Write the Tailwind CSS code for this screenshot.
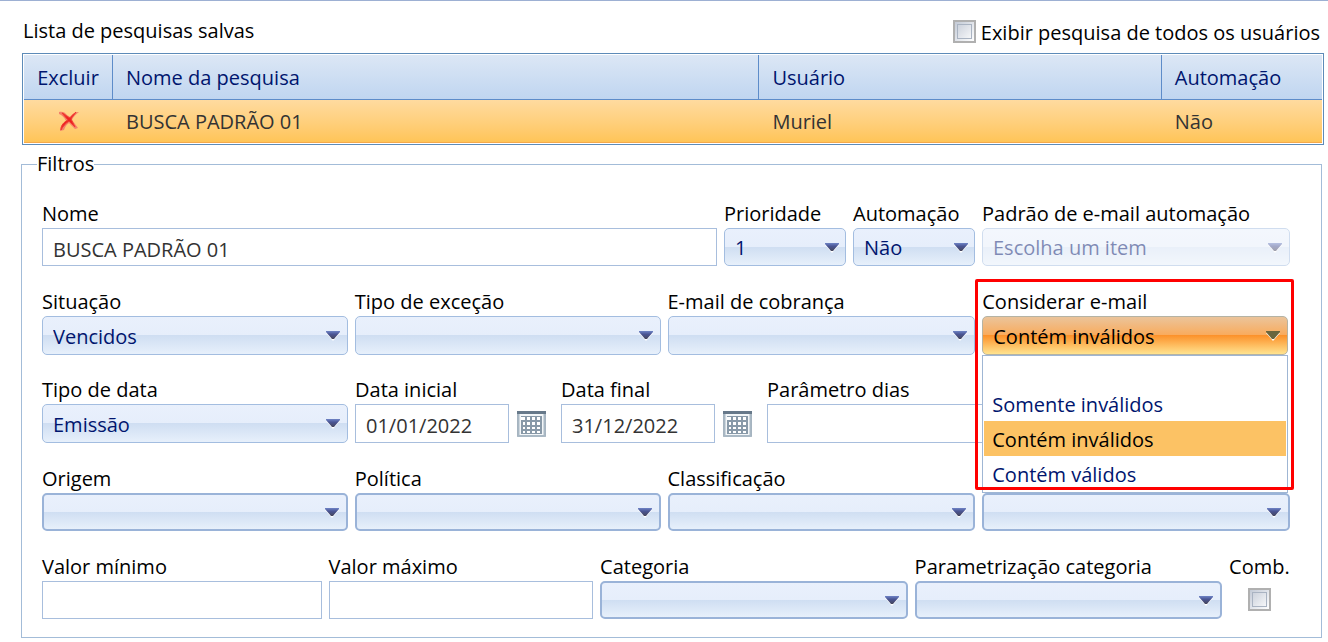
<!DOCTYPE html>
<html lang="pt-BR">
<head>
<meta charset="utf-8">
<title>Pesquisas salvas</title>
<script src="https://cdn.jsdelivr.net/npm/@tailwindcss/browser@4"></script>
</head>
<body class="bg-white border-t border-[#9db0d3] font-['Open_Sans','Noto_Sans',sans-serif] text-[20px] leading-7 text-black">
<svg class="absolute size-0" aria-hidden="true">
  <defs>
    <linearGradient id="ag" x1="0" y1="0" x2="0" y2="1"><stop offset="0" stop-color="#6f84c6"/><stop offset=".4" stop-color="#4a5594"/><stop offset="1" stop-color="#45465c"/></linearGradient>
    <symbol id="arrow" viewBox="0 0 14 10"><path d="M0 2h14L7 10z" fill="#fff"/><path d="M0 0h14v1L8 8H6L0 1z" fill="url(#ag)"/></symbol>
    <symbol id="calendar" viewBox="0 0 29 28">
      <path d="M.5 1.500h28v25h-28z" fill="#f3f6f8" stroke="#a3b1bd"/>
      <path d="M1.500 3v23h26V3" fill="none" stroke="#a9b8c4" stroke-width="2"/>
      <path d="M0 1h29v3H0z" fill="#67798a"/>
      <path d="M4 6h21v18H4z" fill="#8899a8"/>
      <path d="M4 7h4v3H4zM10 7h3v3h-3zM15 7h3v3h-3zM20 7h3v3h-3zM6 12h2v3H6zM10 12h3v3h-3zM15 12h3v3h-3zM20 12h3v3h-3zM6 17h2v2H6zM10 17h3v2h-3zM15 17h3v2h-3zM20 17h3v2h-3zM6 21h2v2H6zM10 21h3v2h-3zM15 21h3v2h-3zM20 21h3v2h-3z" fill="#fff"/>
    </symbol>
  </defs>
</svg>
<main class="pl-[21px] pr-1 pt-4">
  <header class="flex items-start justify-between pl-0.5 pr-1 pb-1.5">
    <h1>Lista de pesquisas salvas</h1>
    <label class="flex items-start gap-[5px]">
      <input type="checkbox" class="mt-[3px] appearance-none size-[23px] border-2 border-[#b0b0b0] outline-1 -outline-offset-5 outline-[#a9b3c2] bg-linear-to-br from-[#c3cad6] to-white">
      <span class="pt-0.5">Exibir pesquisa de todos os usuários</span>
    </label>
  </header>

  <div class="ml-px border border-[#5d8bb8] p-px">
    <table class="w-full table-fixed border-separate border-spacing-0 text-left">
      <thead class="text-[#00156e]">
        <tr class="h-[45px] bg-linear-to-b from-[#dce7f5] to-[#bfd5f0]">
          <th class="w-[89px] border-b border-r border-[#5d8cc9] pt-0.5 text-center font-normal">Excluir</th>
          <th class="w-[49.8%] border-b border-r border-[#5d8cc9] pl-[13px] pt-0.5 font-normal">Nome da pesquisa</th>
          <th class="w-[31%] border-b border-r border-[#5d8cc9] pl-[13px] pt-0.5 font-normal">Usuário</th>
          <th class="border-b border-[#5d8cc9] pl-[13px] pt-0.5 font-normal">Automação</th>
        </tr>
      </thead>
      <tbody class="text-[#333]">
        <tr class="h-[43px] bg-linear-to-b from-[#ffdb9f] to-[#ffc455]">
          <td class="border-b border-[#f5a94a]">
            <button class="block mx-auto" aria-label="Excluir pesquisa">
              <svg class="w-[22px] h-5" viewBox="0 0 22 20"><path d="M1 1c3-1 6 0 8 3l3 2c2-3 5-5 9-5-3 2-6 5-7 8 2 3 4 5 6 8l-3 1-6-6c-3 2-4 4-5 7l-4 1c0-5 3-8 6-10C6 6 4 4 1 3z" fill="#f4806a"/><path d="M4 2c3 1 5 4 8 5 2-3 4-4 6-6-2 3-4 5-5 7 1 3 3 5 4 8l-6-6c-4 3-6 5-8 9 0-5 3-8 7-10z" fill="#ee2020" stroke="#f03a30"/></svg>
            </button>
          </td>
          <td class="border-b border-[#f5a94a] pl-[13px] pt-0.5">BUSCA PADRÃO 01</td>
          <td class="border-b border-[#f5a94a] pl-[13px] pt-0.5">Muriel</td>
          <td class="border-b border-[#f5a94a] pl-[13px] pt-0.5">Não</td>
        </tr>
      </tbody>
    </table>
  </div>

  <fieldset class="mt-[5px] mr-0.5 border border-[#a3bcd8] pl-5 pr-[31px] pb-[18px]">
    <legend class="-ml-[5px]">Filtros</legend>
    <div class="flex flex-col gap-[22px] pt-[22px]">

      <div class="grid grid-cols-[675fr_122fr_122fr_308fr] gap-[7px]">
        <div class="min-w-0">
          <label for="nome" class="block">Nome</label>
          <input id="nome" type="text" value="BUSCA PADRÃO 01" class="block w-full h-[38px] border border-[#a8bedd] px-2.5 pt-1 text-[#333]">
        </div>
        <div class="min-w-0">
          <label for="prioridade" class="block">Prioridade</label>
          <div class="relative">
            <select id="prioridade" class="block w-full h-[38px] appearance-none rounded-[5px] border border-[#a3bde0] bg-[linear-gradient(#e9f0fc_0,#e6eefb_49%,#cfdef2_50%,#e7f0fb_100%)] px-2.5 pt-0.5 text-[#00156e]"><option>1</option></select>
            <svg class="pointer-events-none absolute right-[7px] top-[15px] w-3.5 h-2.5"><use href="#arrow"/></svg>
          </div>
        </div>
        <div class="min-w-0">
          <label for="automacao" class="block">Automação</label>
          <div class="relative">
            <select id="automacao" class="block w-full h-[38px] appearance-none rounded-[5px] border border-[#a3bde0] bg-[linear-gradient(#e9f0fc_0,#e6eefb_49%,#cfdef2_50%,#e7f0fb_100%)] px-2.5 pt-0.5 text-[#00156e]"><option>Não</option></select>
            <svg class="pointer-events-none absolute right-[7px] top-[15px] w-3.5 h-2.5"><use href="#arrow"/></svg>
          </div>
        </div>
        <div class="min-w-0">
          <label for="padrao" class="block whitespace-nowrap">Padrão de e-mail automação</label>
          <div class="relative opacity-50">
            <select id="padrao" disabled class="block w-full h-[38px] appearance-none rounded-[5px] border border-[#a3bde0] bg-[linear-gradient(#e9f0fc_0,#e6eefb_49%,#d5e2f5_50%,#e7f0fb_100%)] px-2.5 pt-0.5 text-[#00156e] opacity-100"><option>Escolha um item</option></select>
            <svg class="pointer-events-none absolute right-2 top-[15px] w-3.5 h-2.5"><use href="#arrow"/></svg>
          </div>
        </div>
      </div>

      <div class="grid grid-cols-[306fr_306fr_308fr_308fr] gap-[7px]">
        <div class="min-w-0">
          <label for="situacao" class="block">Situação</label>
          <div class="relative">
            <select id="situacao" class="block w-full h-[39px] appearance-none rounded-[5px] border border-[#a3bde0] bg-[linear-gradient(#e9f0fc_0,#e6eefb_49%,#cfdef2_50%,#e7f0fb_100%)] px-2.5 pt-0.5 text-[#00156e]"><option>Vencidos</option></select>
            <svg class="pointer-events-none absolute right-2 top-[15px] w-3.5 h-2.5"><use href="#arrow"/></svg>
          </div>
        </div>
        <div class="min-w-0">
          <label for="excecao" class="block">Tipo de exceção</label>
          <div class="relative">
            <select id="excecao" class="block w-full h-[39px] appearance-none rounded-[5px] border border-[#a3bde0] bg-[linear-gradient(#e9f0fc_0,#e6eefb_49%,#cfdef2_50%,#e7f0fb_100%)] px-2.5 pt-0.5 text-[#00156e]"><option></option></select>
            <svg class="pointer-events-none absolute right-2 top-[15px] w-3.5 h-2.5"><use href="#arrow"/></svg>
          </div>
        </div>
        <div class="min-w-0">
          <label for="cobranca" class="block">E-mail de cobrança</label>
          <div class="relative">
            <select id="cobranca" class="block w-full h-[39px] appearance-none rounded-[5px] border border-[#a3bde0] bg-[linear-gradient(#e9f0fc_0,#e6eefb_49%,#cfdef2_50%,#e7f0fb_100%)] px-2.5 pt-0.5 text-[#00156e]"><option></option></select>
            <svg class="pointer-events-none absolute right-2 top-[15px] w-3.5 h-2.5"><use href="#arrow"/></svg>
          </div>
        </div>
        <div class="relative min-w-0 pr-0.5">
          <label for="considerar" class="block">Considerar e-mail</label>
          <div class="relative">
            <button id="considerar" type="button" aria-haspopup="listbox" aria-expanded="true" class="block w-full h-[39px] rounded-[5px] border border-[#b5b3a4] bg-[linear-gradient(#ebc49b_0,#f9ab5c_49%,#fc922b_50%,#ffe38f_100%)] px-2.5 pt-0.5 text-left text-black">Contém inválidos</button>
            <svg class="pointer-events-none absolute right-2 top-[15px] w-3.5 h-2.5" viewBox="0 0 14 10"><path d="M0 2h14L7 10z" fill="#fff"/><path d="M0 0h14v1L8 8H6L0 1z" fill="#69653d"/></svg>
            <ul role="listbox" class="absolute left-0 right-0 top-full z-10 border border-[#9fb6d4] bg-white p-px leading-[33px] text-[#00156e]">
              <li role="option" class="h-[29px]"></li>
              <li role="option" class="px-2 pt-0.5">Somente inválidos</li>
              <li role="option" aria-selected="true" class="bg-[#fcc264] px-2 pt-0.5 text-black">Contém inválidos</li>
              <li role="option" class="px-2 pt-0.5">Contém válidos</li>
            </ul>
          </div>
          <div class="pointer-events-none absolute -left-[7px] -right-1 -top-[9px] z-20 h-[211px] rounded-xs border-3 border-[#f00]"></div>
        </div>
      </div>

      <div class="-mt-px grid grid-cols-[306fr_199fr_199fr_523fr] gap-[7px]">
        <div class="min-w-0">
          <label for="tipodata" class="block">Tipo de data</label>
          <div class="relative">
            <select id="tipodata" class="block w-full h-[39px] appearance-none rounded-[5px] border border-[#a3bde0] bg-[linear-gradient(#e9f0fc_0,#e6eefb_49%,#cfdef2_50%,#e7f0fb_100%)] px-2.5 pt-0.5 text-[#00156e]"><option>Emissão</option></select>
            <svg class="pointer-events-none absolute right-2 top-[15px] w-3.5 h-2.5"><use href="#arrow"/></svg>
          </div>
        </div>
        <div class="min-w-0">
          <label for="inicial" class="block">Data inicial</label>
          <div class="flex items-center gap-2 pr-2">
            <input id="inicial" type="text" value="01/01/2022" class="block min-w-0 flex-1 h-[39px] border border-[#a8bedd] px-2.5 pt-1 text-[#333]">
            <button type="button" aria-label="Abrir calendário da data inicial"><svg class="block w-[29px] h-7"><use href="#calendar"/></svg></button>
          </div>
        </div>
        <div class="min-w-0">
          <label for="final" class="block">Data final</label>
          <div class="flex items-center gap-2 pr-2">
            <input id="final" type="text" value="31/12/2022" class="block min-w-0 flex-1 h-[39px] border border-[#a8bedd] px-2.5 pt-1 text-[#333]">
            <button type="button" aria-label="Abrir calendário da data final"><svg class="block w-[29px] h-7"><use href="#calendar"/></svg></button>
          </div>
        </div>
        <div class="min-w-0 pr-8">
          <label for="dias" class="block">Parâmetro dias</label>
          <input id="dias" type="text" class="block w-full h-[39px] border border-[#a8bedd] px-2.5 text-[#333]">
        </div>
      </div>

      <div class="grid grid-cols-[306fr_306fr_308fr_308fr] items-end gap-[7px]">
        <div class="min-w-0">
          <label for="origem" class="block">Origem</label>
          <div class="relative">
            <select id="origem" class="block w-full h-[38px] appearance-none rounded-[5px] border-2 border-[#9ab3d8] bg-[linear-gradient(#e9f0fc_0,#e6eefb_49%,#cfdef2_50%,#e7f0fb_100%)] px-2.5"><option></option></select>
            <svg class="pointer-events-none absolute right-[9px] top-[15px] w-3.5 h-2.5"><use href="#arrow"/></svg>
          </div>
        </div>
        <div class="min-w-0">
          <label for="politica" class="block">Política</label>
          <div class="relative">
            <select id="politica" class="block w-full h-[38px] appearance-none rounded-[5px] border-2 border-[#9ab3d8] bg-[linear-gradient(#e9f0fc_0,#e6eefb_49%,#cfdef2_50%,#e7f0fb_100%)] px-2.5"><option></option></select>
            <svg class="pointer-events-none absolute right-[9px] top-[15px] w-3.5 h-2.5"><use href="#arrow"/></svg>
          </div>
        </div>
        <div class="min-w-0">
          <label for="classificacao" class="block">Classificação</label>
          <div class="relative">
            <select id="classificacao" class="block w-full h-[38px] appearance-none rounded-[5px] border-2 border-[#9ab3d8] bg-[linear-gradient(#e9f0fc_0,#e6eefb_49%,#cfdef2_50%,#e7f0fb_100%)] px-2.5"><option></option></select>
            <svg class="pointer-events-none absolute right-[9px] top-[15px] w-3.5 h-2.5"><use href="#arrow"/></svg>
          </div>
        </div>
        <div class="relative min-w-0">
          <select aria-label="Filtro adicional" class="block w-full h-[38px] appearance-none rounded-[5px] border-2 border-[#9ab3d8] bg-[linear-gradient(#e9f0fc_0,#e6eefb_49%,#cfdef2_50%,#e7f0fb_100%)] px-2.5"><option></option></select>
          <svg class="pointer-events-none absolute right-[9px] top-[15px] w-3.5 h-2.5"><use href="#arrow"/></svg>
        </div>
      </div>

      <div class="grid grid-cols-[280fr_265fr_308fr_308fr_61fr] gap-[7px]">
        <div class="min-w-0">
          <label for="minimo" class="block">Valor mínimo</label>
          <input id="minimo" type="text" class="block w-full h-[38px] border border-[#a8bedd] px-2.5 text-[#333]">
        </div>
        <div class="min-w-0">
          <label for="maximo" class="block">Valor máximo</label>
          <input id="maximo" type="text" class="block w-full h-[38px] border border-[#a8bedd] px-2.5 text-[#333]">
        </div>
        <div class="min-w-0">
          <label for="categoria" class="block">Categoria</label>
          <div class="relative">
            <select id="categoria" class="block w-full h-[38px] appearance-none rounded-[5px] border-2 border-[#9ab3d8] bg-[linear-gradient(#e9f0fc_0,#e6eefb_49%,#cfdef2_50%,#e7f0fb_100%)] px-2.5"><option></option></select>
            <svg class="pointer-events-none absolute right-[9px] top-[15px] w-3.5 h-2.5"><use href="#arrow"/></svg>
          </div>
        </div>
        <div class="min-w-0">
          <label for="parametrizacao" class="block">Parametrização categoria</label>
          <div class="relative">
            <select id="parametrizacao" class="block w-full h-[38px] appearance-none rounded-[5px] border-2 border-[#9ab3d8] bg-[linear-gradient(#e9f0fc_0,#e6eefb_49%,#cfdef2_50%,#e7f0fb_100%)] px-2.5"><option></option></select>
            <svg class="pointer-events-none absolute right-[9px] top-[15px] w-3.5 h-2.5"><use href="#arrow"/></svg>
          </div>
        </div>
        <div class="min-w-0">
          <label for="comb" class="block">Comb.</label>
          <input id="comb" type="checkbox" class="block mx-auto mt-[7px] appearance-none size-[23px] border-2 border-[#b0b0b0] outline-1 -outline-offset-5 outline-[#a9b3c2] bg-linear-to-br from-[#c3cad6] to-white">
        </div>
      </div>
    </div>
  </fieldset>
</main>
</body>
</html>
